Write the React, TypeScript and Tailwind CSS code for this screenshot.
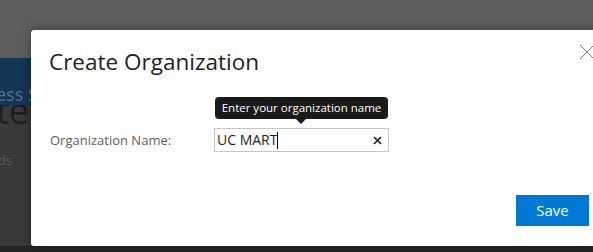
import React from "react";

export default function App() {
  return (
    <div
      className="relative w-[593px] h-[252px] overflow-hidden bg-[#3a3938]"
      style={{ fontFamily: '"Open Sans", "Noto Sans", sans-serif' }}
    >
      {/* background page under overlay */}
      <div className="flex flex-col h-full w-[31px] overflow-hidden">
        <div className="h-[58px] shrink-0 bg-[#5f5e5c]" />
        <div className="h-[47px] shrink-0 bg-[#143657] text-[#5d7187] text-[18px] leading-none pt-[27px] whitespace-nowrap overflow-hidden">
          <span className="ml-[-4px]">ess S</span>
        </div>
        <div className="flex-1 bg-[#3a3938] relative overflow-hidden">
          <div className="absolute left-[-4px] top-[-12px] text-[36px] text-[#1f1e1d] leading-none whitespace-nowrap">ter</div>
          <div className="absolute left-[-2px] top-[46px] text-[13px] text-[#5a5856] whitespace-nowrap">ds</div>
        </div>
        <div className="h-[6px] shrink-0 bg-[#252423]" />
      </div>
      <div className="absolute left-0 right-0 top-0 h-[30px] bg-[#5f5e5c]" />
      <div className="absolute left-0 right-0 bottom-0 h-[6px] bg-[#252423]" />

      {/* dialog */}
      <div className="absolute left-[31px] top-[30px] w-[600px] h-[216px] bg-white rounded-[3px] shadow-[0_0_12px_rgba(0,0,0,0.35)]">
        <div className="absolute left-[548px] top-[14px] w-[16px] h-[16px]">
          <svg width="16" height="16" viewBox="0 0 16 16">
            <path d="M1 1 L15 15 M15 1 L1 15" stroke="#7a7a7a" strokeWidth="1" fill="none" />
          </svg>
        </div>
        <div className="pl-[18px] pt-[17px] text-[22.5px] leading-[30px] text-[#201f1e]">Create Organization</div>
        <div className="flex items-start mt-[51px] pl-[19px]">
          <div className="w-[164px] pt-[3px] text-[13px] text-[#605e5c] leading-[18px]">Organization Name:</div>
          <div className="relative w-[175px]">
            <div className="absolute left-[1px] top-[-31px] w-[173px] h-[22px] bg-[#1b1a19] rounded-[4px] text-white text-[11.5px] leading-[22px] text-center whitespace-nowrap">
              Enter your organization name
              <div className="absolute left-[81px] top-[22px] w-0 h-0 border-l-[5px] border-r-[5px] border-t-[5px] border-l-transparent border-r-transparent border-t-[#1b1a19]" />
            </div>
            <div className="h-[24px] border border-[#c8c6c4] flex items-center pl-[2px] pr-[6px]">
              <span className="text-[14px] text-[#201f1e] leading-[22px]">UC MART</span>
              <span className="w-px h-[17px] bg-black" />
              <svg className="ml-auto" width="9" height="9" viewBox="0 0 9 9">
                <path d="M1 1 L8 8 M8 1 L1 8" stroke="#201f1e" strokeWidth="1.6" fill="none" />
              </svg>
            </div>
          </div>
        </div>
        <div className="absolute left-[485px] top-[165px] w-[73px] h-[31px] bg-[#0078d4] text-white text-[15px] flex items-center justify-center">
          Save
        </div>
      </div>
    </div>
  );
}
